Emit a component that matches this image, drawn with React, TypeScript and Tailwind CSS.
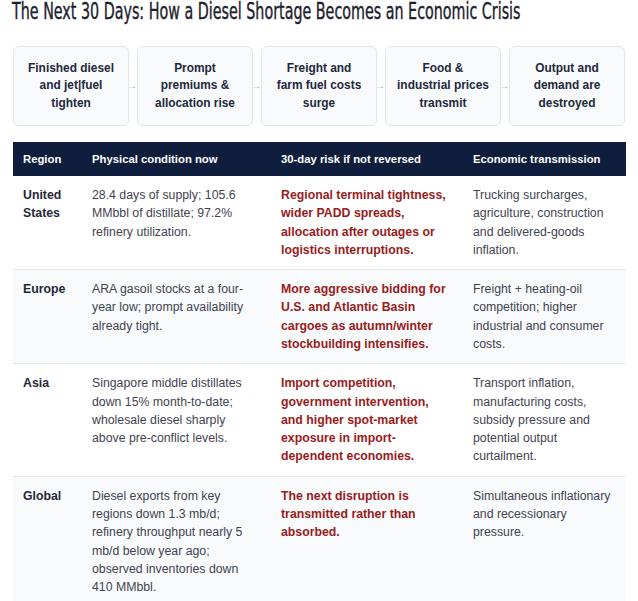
import React from "react";

const steps: string[][] = [
  ["Finished diesel", "and jet|fuel", "tighten"],
  ["Prompt", "premiums &", "allocation rise"],
  ["Freight and", "farm fuel costs", "surge"],
  ["Food &", "industrial prices", "transmit"],
  ["Output and", "demand are", "destroyed"],
];

const rows = [
  {
    region: "United States",
    physical: "28.4 days of supply; 105.6 MMbbl of distillate; 97.2% refinery utilization.",
    risk: "Regional terminal tightness, wider PADD spreads, allocation after outages or logistics interruptions.",
    econ: "Trucking surcharges, agriculture, construction and delivered-goods inflation.",
  },
  {
    region: "Europe",
    physical: "ARA gasoil stocks at a four-year low; prompt availability already tight.",
    risk: "More aggressive bidding for U.S. and Atlantic Basin cargoes as autumn/winter stockbuilding intensifies.",
    econ: "Freight + heating-oil competition; higher industrial and consumer costs.",
  },
  {
    region: "Asia",
    physical: "Singapore middle distillates down 15% month-to-date; wholesale diesel sharply above pre-conflict levels.",
    risk: "Import competition, government intervention, and higher spot-market exposure in import-dependent economies.",
    econ: "Transport inflation, manufacturing costs, subsidy pressure and potential output curtailment.",
  },
  {
    region: "Global",
    physical: "Diesel exports from key regions down 1.3 mb/d; refinery throughput nearly 5 mb/d below year ago; observed inventories down 410 MMbbl.",
    risk: "The next disruption is transmitted rather than absorbed.",
    econ: "Simultaneous inflationary and recessionary pressure.",
  },
];

export default function App() {
  return (
    <div
      className="w-[638px] bg-white px-[13px] text-[#374151]"
      style={{ fontFamily: '"Liberation Sans", Arial, sans-serif' }}
    >
      <h1
        className="-ml-[1px] w-max origin-top-left scale-y-[1.447] text-[15.9px] leading-[15.9px] font-normal whitespace-nowrap text-[#1c212c] [-webkit-text-stroke:0.25px]"
        style={{ fontFamily: '"Liberation Sans Narrow", "DejaVu Sans Condensed", "Liberation Sans", sans-serif' }}
      >
        The Next 30 Days: How a Diesel Shortage Becomes an Economic Crisis
      </h1>

      <div className="mt-[30px] flex gap-2">
        {steps.map((lines, i) => (
          <div key={i} className="relative flex-1">
            <div className="flex h-[80px] items-center justify-center rounded-md border border-[#e1e6ee] bg-[#f8fafc] text-center text-[11.9px] font-bold leading-[17.5px] text-[#1e293b]">
              <div>
                {lines.map((l, j) => (
                  <div key={j}>{l}</div>
                ))}
              </div>
            </div>
            {i < steps.length - 1 && (
              <span className="absolute right-[-8px] top-1/2 -translate-y-1/2 text-[10px] leading-none text-[#9ca3af]">
                →
              </span>
            )}
          </div>
        ))}
      </div>

      <table className="mt-4 w-full table-fixed border-collapse text-left">
        <colgroup>
          <col className="w-[69px]" />
          <col className="w-[189px]" />
          <col className="w-[192px]" />
          <col className="w-[163px]" />
        </colgroup>
        <thead>
          <tr className="bg-[#0f1e3c] text-white">
            <th className="px-[10px] py-[9px] text-[11.3px] font-bold leading-[16px]">Region</th>
            <th className="px-[10px] py-[9px] text-[11.3px] font-bold leading-[16px]">Physical condition now</th>
            <th className="px-[10px] py-[9px] text-[11.3px] font-bold leading-[16px]">30-day risk if not reversed</th>
            <th className="px-[10px] py-[9px] text-[11.3px] font-bold leading-[16px]">Economic transmission</th>
          </tr>
        </thead>
        <tbody>
          {rows.map((r, i) => (
            <tr
              key={r.region}
              className={`${i % 2 === 1 ? "bg-[#f8fafc]" : "bg-white"} border-b border-[#e3e8ef] align-top text-[12.3px] leading-[18.3px]`}
            >
              <td className="px-[10px] pt-[10px] pb-[10px] font-bold text-[#1f2937]">{r.region}</td>
              <td className="px-[10px] pt-[10px] pb-[10px] text-[#3f4450]">{r.physical}</td>
              <td className="px-[10px] pt-[10px] pb-[10px] font-bold text-[#991b1b]">{r.risk}</td>
              <td className="px-[10px] pt-[10px] pb-[10px] text-[#3f4450]">{r.econ}</td>
            </tr>
          ))}
        </tbody>
      </table>
    </div>
  );
}
